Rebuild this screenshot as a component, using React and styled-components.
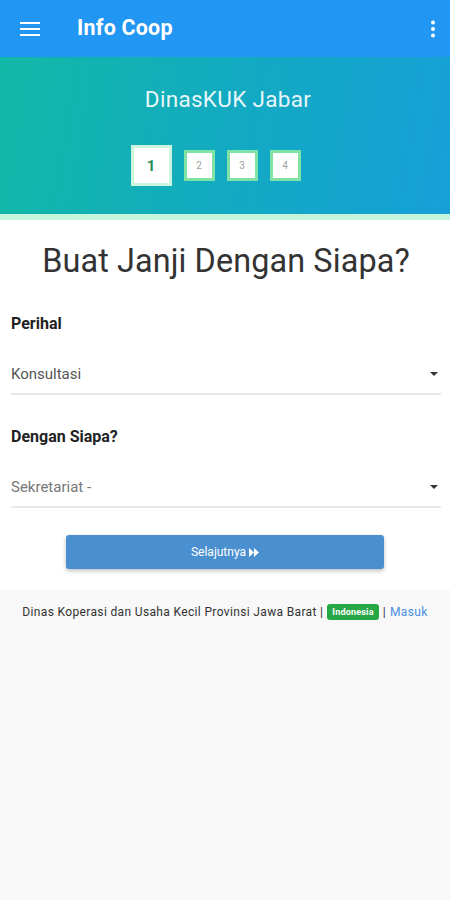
import React from 'react';
import styled, {createGlobalStyle} from 'styled-components';

const GlobalStyle = createGlobalStyle`
  html, body {
    margin: 0;
    padding: 0;
    background: #f8f8f8;
    font-family: Roboto, "Liberation Sans", sans-serif;
  }
`;

const Page = styled.div`
  min-height: 900px;
  display: flex;
  flex-direction: column;
  background: #f8f8f8;
`;

const AppBar = styled.div`
  height: 57px;
  background: #2196f3;
  display: flex;
  align-items: center;
  padding: 0 14px 0 20px;
  color: #fff;
`;

const Title = styled.div`
  flex: 1;
  margin-left: 37px;
  margin-top: -2px;
  font-size: 21.5px;
  font-weight: 700;
  letter-spacing: 0.2px;
`;

const IconBtn = styled.div`
  display: flex;
  align-items: center;
  justify-content: center;
`;

const Hero = styled.div`
  height: 157px;
  background: linear-gradient(100deg, #12b8a6 0%, #13a9c4 55%, #16a0d8 100%);
  border-bottom: 6px solid #c6f4db;
  display: flex;
  flex-direction: column;
  align-items: center;
  box-sizing: content-box;
`;

const Brand = styled.div`
  margin-top: 29px;
  font-size: 22.5px;
  color: rgba(255, 255, 255, 0.92);
  letter-spacing: 0.3px;
  margin-left: 6px;
`;

const Steps = styled.div`
  margin-top: 33px;
  display: flex;
  align-items: center;
  gap: 12px;
  margin-left: -19px;
`;

const Step = styled.div`
  width: ${p => (p.active ? 35 : 25)}px;
  height: ${p => (p.active ? 35 : 25)}px;
  background: #fff;
  border: 3px solid ${p => (p.active ? '#cdf5de' : '#7ee3a4')};
  display: flex;
  align-items: center;
  justify-content: center;
  font-size: ${p => (p.active ? 15 : 10)}px;
  font-weight: ${p => (p.active ? 700 : 400)};
  color: ${p => (p.active ? '#1f8a56' : '#a0a0a0')};
`;

const Content = styled.div`
  background: #fff;
  padding: 22px 9px 21px 11px;
  display: flex;
  flex-direction: column;
`;

const Heading = styled.h1`
  margin: 0;
  text-align: center;
  font-size: 32.4px;
  font-weight: 400;
  color: #333;
  letter-spacing: 0.1px;
`;

const Label = styled.div`
  margin-top: ${p => p.top}px;
  font-size: 16px;
  font-weight: 700;
  color: #222;
`;

const Select = styled.div`
  margin-top: 32px;
  display: flex;
  align-items: center;
  justify-content: space-between;
  padding: 0 3px 10px 0;
  border-bottom: 2px solid #e8e8e8;
  font-size: 15px;
  color: ${p => (p.muted ? '#777' : '#555')};
`;

const Caret = styled.span`
  width: 0;
  height: 0;
  border-left: 4px solid transparent;
  border-right: 4px solid transparent;
  border-top: 4px solid #333;
`;

const Button = styled.button`
  align-self: center;
  margin-top: 27px;
  margin-left: -2px;
  width: 318px;
  height: 34px;
  border: none;
  border-radius: 3px;
  background: #4a8fd0;
  color: #fff;
  font-family: Roboto, "Liberation Sans", sans-serif;
  font-size: 12px;
  box-shadow: 0 2px 4px rgba(0, 0, 0, 0.25);
  display: flex;
  align-items: center;
  justify-content: center;
  gap: 3px;
`;

const Footer = styled.div`
  padding: 14px 0;
  display: flex;
  align-items: center;
  justify-content: center;
  gap: 4px;
  font-size: 12px;
  letter-spacing: 0.35px;
  color: #333;
`;

const Badge = styled.span`
  background: #28a745;
  color: #fff;
  font-size: 9px;
  font-weight: 700;
  letter-spacing: 0.2px;
  padding: 3px 5px;
  border-radius: 3px;
`;

const Link = styled.a`
  color: #4a90e2;
  font-size: 12px;
  text-decoration: none;
`;

export default function App() {
  return (
    <Page>
      <GlobalStyle />
      <AppBar>
        <IconBtn>
          <svg width="20" height="14" viewBox="0 0 20 14">
            <rect x="0" y="0" width="20" height="2" fill="#fff" />
            <rect x="0" y="6" width="20" height="2" fill="#fff" />
            <rect x="0" y="12" width="20" height="2" fill="#fff" />
          </svg>
        </IconBtn>
        <Title>Info Coop</Title>
        <IconBtn>
          <svg width="6" height="18" viewBox="0 0 6 18">
            <circle cx="3" cy="2.5" r="2" fill="#fff" />
            <circle cx="3" cy="9" r="2" fill="#fff" />
            <circle cx="3" cy="15.5" r="2" fill="#fff" />
          </svg>
        </IconBtn>
      </AppBar>
      <Hero>
        <Brand>DinasKUK Jabar</Brand>
        <Steps>
          <Step active>1</Step>
          <Step>2</Step>
          <Step>3</Step>
          <Step>4</Step>
        </Steps>
      </Hero>
      <Content>
        <Heading>Buat Janji Dengan Siapa?</Heading>
        <Label top={34}>Perihal</Label>
        <Select>
          Konsultasi
          <Caret />
        </Select>
        <Label top={32}>Dengan Siapa?</Label>
        <Select muted>
          Sekretariat -
          <Caret />
        </Select>
        <Button>
          Selajutnya
          <svg width="10" height="9" viewBox="0 0 10 9">
            <polygon points="0,0 5,4.5 0,9" fill="#fff" />
            <polygon points="5,0 10,4.5 5,9" fill="#fff" />
          </svg>
        </Button>
      </Content>
      <Footer>
        Dinas Koperasi dan Usaha Kecil Provinsi Jawa Barat |
        <Badge>Indonesia</Badge>
        | <Link href="#">Masuk</Link>
      </Footer>
    </Page>
  );
}
